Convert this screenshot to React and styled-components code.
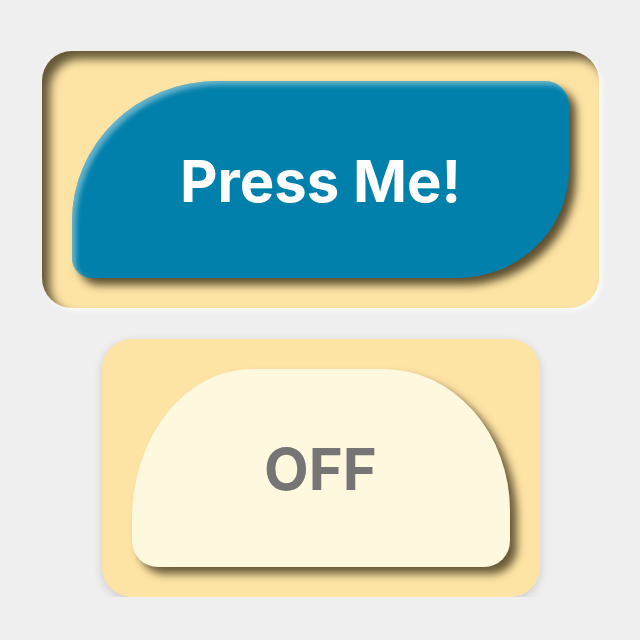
import React from 'react'
import styled, { createGlobalStyle } from 'styled-components'

const Global = createGlobalStyle`
body {
  margin: 0;
  background: #efefef;
  font-family: Inter, "Liberation Sans", sans-serif;
}
`

const Page = styled.div`
display: flex;
flex-direction: column;
align-items: center;
gap: 31px;
padding-top: 51px;
padding-left: 1px;
`

const Panel = styled.div`
box-sizing: border-box;
width: ${(p) => p.w}px;
height: ${(p) => p.h}px;
padding: 30px;
border-radius: 30px;
background: #fee4a4;
box-shadow: ${(p) =>
  p.sunken
    ? 'inset 8px 8px 10px rgba(35, 28, 12, 0.7), 3px 3px 5px rgba(255, 255, 255, 0.7)'
    : '0 3px 10px rgba(0, 0, 0, 0.15)'};
`

const PushButton = styled.button`
width: 100%;
height: 100%;
border: none;
margin: 0;
padding: 0;
display: flex;
align-items: center;
justify-content: center;
font-family: Inter, "Liberation Sans", sans-serif;
font-weight: 700;
font-size: 58px;
cursor: pointer;
`

const PressButton = styled(PushButton)`
background: #0080aa;
color: #ffffff;
border-radius: 145px 24px 112px 20px / 140px 24px 108px 20px;
box-shadow: inset 4px 4px 5px rgba(255, 255, 255, 0.4), 7px 7px 8px rgba(40, 30, 10, 0.75);
padding-top: 2px;
`

const ToggleButton = styled(PushButton)`
background: #fef8df;
color: #767474;
border-radius: 120px 126px 26px 26px / 150px 142px 26px 26px;
box-shadow: 7px 7px 8px rgba(40, 30, 10, 0.7);
padding-top: 2px;
`

export default function App() {
  return (
    <Page>
      <Global />
      <Panel w={557} h={257} sunken>
        <PressButton>Press Me!</PressButton>
      </Panel>
      <Panel w={438} h={258}>
        <ToggleButton>OFF</ToggleButton>
      </Panel>
    </Page>
  )
}
